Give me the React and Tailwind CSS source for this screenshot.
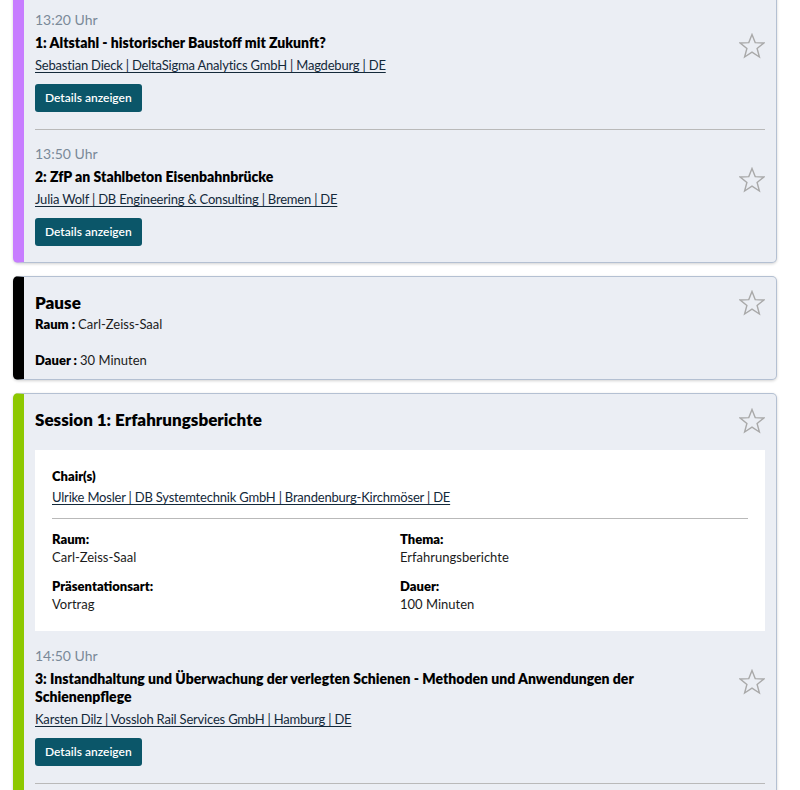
import React from "react";

const talksA = [
  {
    time: "13:20 Uhr",
    title: "1: Altstahl - historischer Baustoff mit Zukunft?",
    people: ["Sebastian Dieck ", " DeltaSigma Analytics GmbH ", " Magdeburg ", " DE"],
  },
  {
    time: "13:50 Uhr",
    title: "2: ZfP an Stahlbeton Eisenbahnbrücke",
    people: ["Julia Wolf ", " DB Engineering & Consulting ", " Bremen ", " DE"],
  },
];

const talksB = [
  {
    time: "14:50 Uhr",
    title: "3: Instandhaltung und Überwachung der verlegten Schienen - Methoden und Anwendungen der Schienenpflege",
    people: ["Karsten Dilz ", " Vossloh Rail Services GmbH ", " Hamburg ", " DE"],
  },
];

function Star({ className = "" }) {
  return (
    <svg viewBox="0 0 26 26" className={"w-[26px] h-[26px] shrink-0 " + className} fill="none">
      <polygon
        points="13,1.5 16.2,9.6 24.8,10 18.1,15.5 20.4,24 13,19.2 5.6,24 7.9,15.5 1.2,10 9.8,9.6"
        stroke="#a9a9a9"
        strokeWidth="1.4"
        strokeLinejoin="miter"
      />
    </svg>
  );
}

// speaker line, pipes between name, company, city and country
function PeopleLink({ parts, className = "" }) {
  return (
    <div className={"text-[13px] leading-[18px] tracking-[-0.2px] " + className}>
      <a href="#" className="text-[#14293a] underline underline-offset-2 decoration-[#14293a]">
        {parts.join("|")}
      </a>
    </div>
  );
}

function Talk({ talk, last }) {
  return (
    <div className={"pt-[14px] " + (last ? "pb-[16px]" : "pb-[17px] border-b border-[#b9b9b9]")}>
      <div className="flex items-start gap-4">
        <div className="flex-1">
          <div className="text-[14px] leading-[20px] text-[#7a8998]">{talk.time}</div>
          <div className="mt-[4px] text-[14px] leading-[18px] font-extrabold text-black pr-[70px]">{talk.title}</div>
          <PeopleLink parts={talk.people} className="mt-[4px]" />
          <button className="block mt-[10px] h-[28px] px-[10px] rounded-[3px] bg-[#0b5669] text-white text-[12px] font-semibold">
            Details anzeigen
          </button>
        </div>
        <Star className="mt-[23px]" />
      </div>
    </div>
  );
}

function Card({ accent, children, className = "" }) {
  return (
    <div className={"rounded-[5px] border border-[#b4c0d2] border-l-[11px] bg-[#ebeef4] shadow-[0_1px_3px_rgba(0,0,0,0.18)] pl-[11px] pr-[11px] " + accent + " " + className}>
      {children}
    </div>
  );
}

function Field({ label, value }) {
  return (
    <div>
      <div className="text-[13px] leading-[18px] font-extrabold text-black">{label}</div>
      <div className="text-[13px] leading-[18px] text-[#1b1b1b]">{value}</div>
    </div>
  );
}

export default function App() {
  return (
    <div className="min-h-screen bg-white pl-[13px] pr-[23px] font-['Lato',sans-serif] overflow-hidden">
      <div className="flex flex-col gap-[13px] -mt-[10px]">
        <Card accent="border-l-[#c77dff]" className="pt-[5px]">
          {talksA.map((t, i) => (
            <Talk key={t.time} talk={t} last={i === talksA.length - 1} />
          ))}
        </Card>

        <Card accent="border-l-black" className="pt-[15px] pb-[10px]">
          <div className="flex items-start">
            <div className="flex-1">
              <div className="text-[17px] leading-[22px] font-extrabold text-black">Pause</div>
              <div className="mt-[2px] text-[13px] leading-[17.5px] text-[#1b1b1b]">
                <span className="font-extrabold text-black">Raum : </span>Carl-Zeiss-Saal
              </div>
              <div className="h-[18px]" />
              <div className="text-[13px] leading-[17.5px] text-[#1b1b1b]">
                <span className="font-extrabold text-black">Dauer : </span>30 Minuten
              </div>
            </div>
            <Star className="-mt-[2px]" />
          </div>
        </Card>

        <Card accent="border-l-[#8dc800]" className="pt-[14px]">
          <div className="flex items-start">
            <div className="flex-1 text-[17px] leading-[24px] font-extrabold text-black">Session 1: Erfahrungsberichte</div>
            <Star />
          </div>
          <div className="mt-[16px] bg-white px-[17px] pt-[16px] pb-[18px]">
            <div className="text-[13px] leading-[20px] font-extrabold text-black">Chair(s)</div>
            <PeopleLink
              parts={["Ulrike Mosler ", " DB Systemtechnik GmbH ", " Brandenburg-Kirchmöser ", " DE"]}
              className="mt-[2px]"
            />
            <div className="mt-[12px] border-t border-[#b9b9b9]" />
            <div className="mt-[11px] grid grid-cols-2 gap-y-[11px]">
              <Field label="Raum:" value="Carl-Zeiss-Saal" />
              <Field label="Thema:" value="Erfahrungsberichte" />
              <Field label="Präsentationsart:" value="Vortrag" />
              <Field label="Dauer:" value="100 Minuten" />
            </div>
          </div>
          <div className="pt-[1px]">
            {talksB.map((t) => (
              <Talk key={t.time} talk={t} last={false} />
            ))}
          </div>
          <div className="h-[60px]" />
        </Card>
      </div>
    </div>
  );
}
